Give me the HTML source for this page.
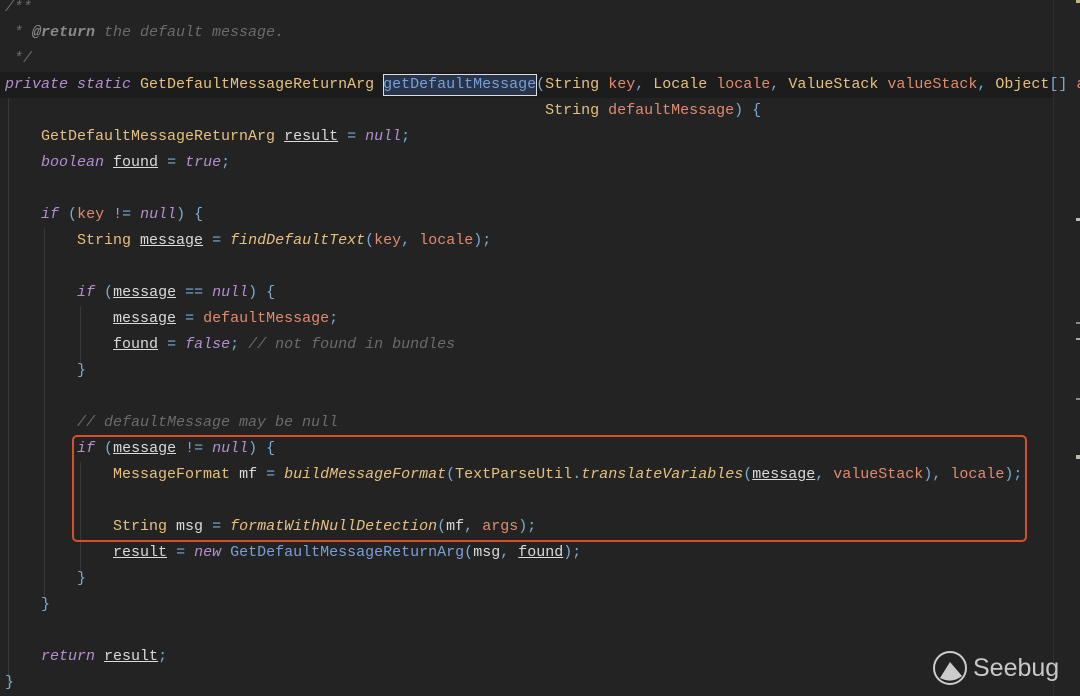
<!DOCTYPE html>
<html><head><meta charset="utf-8"><style>
body{margin:0;width:1080px;height:696px;background:#232323;overflow:hidden;position:relative;font-family:"Liberation Mono",monospace;font-size:15px;}
.l{position:absolute;left:5px;white-space:pre;color:#dadada;height:26px;line-height:26px}
.k{color:#b48ed0;font-style:italic}
.t{color:#e6c07e}
.f{color:#e6c07e;font-style:italic}
.p{color:#e08b6f}
.u{text-decoration:underline}
.c{color:#6b6b6b;font-style:italic}
.cb{color:#8a8a8a;font-style:italic;font-weight:bold}
.b{color:#78acd6}
.n{color:#7a9fd8}
.g{position:absolute;width:1px;background:#383838}
</style></head><body>
<div style="position:absolute;left:0;top:72px;width:1053px;height:26px;background:#1c1c1c"></div>
<div style="position:absolute;left:1053px;top:0;width:1px;height:696px;background:#2f2f2f"></div>
<div class="g" style="left:8px;top:98px;height:590px"></div>
<div class="g" style="left:44px;top:228px;height:368px"></div>
<div class="g" style="left:80px;top:306px;height:56px"></div>
<div class="g" style="left:80px;top:462px;height:108px"></div>
<div style="position:absolute;left:383px;top:74px;width:154px;height:22px;border:1px solid #ddd;box-sizing:border-box;background:#27344a"></div>

<div class="l c" style="top:-5px">/**</div>
<div class="l c" style="top:20px"> * <span class="cb">@return</span> the default message.</div>
<div class="l c" style="top:46px"> */</div>
<div class="l" style="top:72px"><span class="k">private static</span> <span class="t">GetDefaultMessageReturnArg</span> <span class="n">getDefaultMessage</span><span class="b">(</span><span class="t">String</span> <span class="p">key</span><span class="b">,</span> <span class="t">Locale</span> <span class="p">locale</span><span class="b">,</span> <span class="t">ValueStack</span> <span class="p">valueStack</span><span class="b">,</span> <span class="t">Object</span><span class="b">[]</span> <span class="p">args</span></div>
<div class="l" style="top:98px">                                                            <span class="t">String</span> <span class="p">defaultMessage</span><span class="b">) {</span></div>
<div class="l" style="top:124px">    <span class="t">GetDefaultMessageReturnArg</span> <span class="u">result</span> <span class="b">=</span> <span class="k">null</span><span class="b">;</span></div>
<div class="l" style="top:150px">    <span class="k">boolean</span> <span class="u">found</span> <span class="b">=</span> <span class="k">true</span><span class="b">;</span></div>
<div class="l" style="top:202px">    <span class="k">if</span> <span class="b">(</span><span class="p">key</span> <span class="b">!=</span> <span class="k">null</span><span class="b">) {</span></div>
<div class="l" style="top:228px">        <span class="t">String</span> <span class="u">message</span> <span class="b">=</span> <span class="f">findDefaultText</span><span class="b">(</span><span class="p">key</span><span class="b">,</span> <span class="p">locale</span><span class="b">);</span></div>
<div class="l" style="top:280px">        <span class="k">if</span> <span class="b">(</span><span class="u">message</span> <span class="b">==</span> <span class="k">null</span><span class="b">) {</span></div>
<div class="l" style="top:306px">            <span class="u">message</span> <span class="b">=</span> <span class="p">defaultMessage</span><span class="b">;</span></div>
<div class="l" style="top:332px">            <span class="u">found</span> <span class="b">=</span> <span class="k">false</span><span class="b">;</span> <span class="c">// not found in bundles</span></div>
<div class="l" style="top:358px">        <span class="b">}</span></div>
<div class="l c" style="top:410px">        // defaultMessage may be null</div>
<div class="l" style="top:436px">        <span class="k">if</span> <span class="b">(</span><span class="u">message</span> <span class="b">!=</span> <span class="k">null</span><span class="b">) {</span></div>
<div class="l" style="top:462px">            <span class="t">MessageFormat</span> mf <span class="b">=</span> <span class="f">buildMessageFormat</span><span class="b">(</span><span class="t">TextParseUtil</span><span class="b">.</span><span class="f">translateVariables</span><span class="b">(</span><span class="u">message</span><span class="b">,</span> <span class="p">valueStack</span><span class="b">),</span> <span class="p">locale</span><span class="b">);</span></div>
<div class="l" style="top:514px">            <span class="t">String</span> msg <span class="b">=</span> <span class="f">formatWithNullDetection</span><span class="b">(</span>mf<span class="b">,</span> <span class="p">args</span><span class="b">);</span></div>
<div class="l" style="top:540px">            <span class="u">result</span> <span class="b">=</span> <span class="k">new</span> <span class="n">GetDefaultMessageReturnArg</span><span class="b">(</span>msg<span class="b">,</span> <span class="u">found</span><span class="b">);</span></div>
<div class="l" style="top:566px">        <span class="b">}</span></div>
<div class="l" style="top:592px">    <span class="b">}</span></div>
<div class="l" style="top:644px">    <span class="k">return</span> <span class="u">result</span><span class="b">;</span></div>
<div class="l" style="top:670px"><span class="b">}</span></div>

<div style="position:absolute;left:72px;top:435px;width:955px;height:107px;border:2px solid #d5502b;border-radius:5px;box-sizing:border-box"></div>

<div style="position:absolute;left:1076px;top:0;width:4px;height:3px;background:#c9b27a"></div>
<div style="position:absolute;left:1076px;top:218px;width:4px;height:3px;background:#bbb"></div>
<div style="position:absolute;left:1076px;top:322px;width:4px;height:2px;background:#888"></div>
<div style="position:absolute;left:1076px;top:338px;width:4px;height:2px;background:#aaa"></div>
<div style="position:absolute;left:1076px;top:398px;width:4px;height:2px;background:#888"></div>
<div style="position:absolute;left:1076px;top:455px;width:4px;height:4px;background:#bba"></div>

<svg style="position:absolute;left:932px;top:648px" width="40" height="40" viewBox="0 0 40 40">
<circle cx="18" cy="20" r="16" fill="none" stroke="#ccc" stroke-width="2"/>
<path d="M8 30 L18 14 L30 28 Q20 36 8 30Z" fill="#ccc"/>
</svg>
<div style="position:absolute;left:973px;top:648px;font-family:'Liberation Sans',sans-serif;font-size:25px;color:#c8c8c8;line-height:40px">Seebug</div>
</body></html>
